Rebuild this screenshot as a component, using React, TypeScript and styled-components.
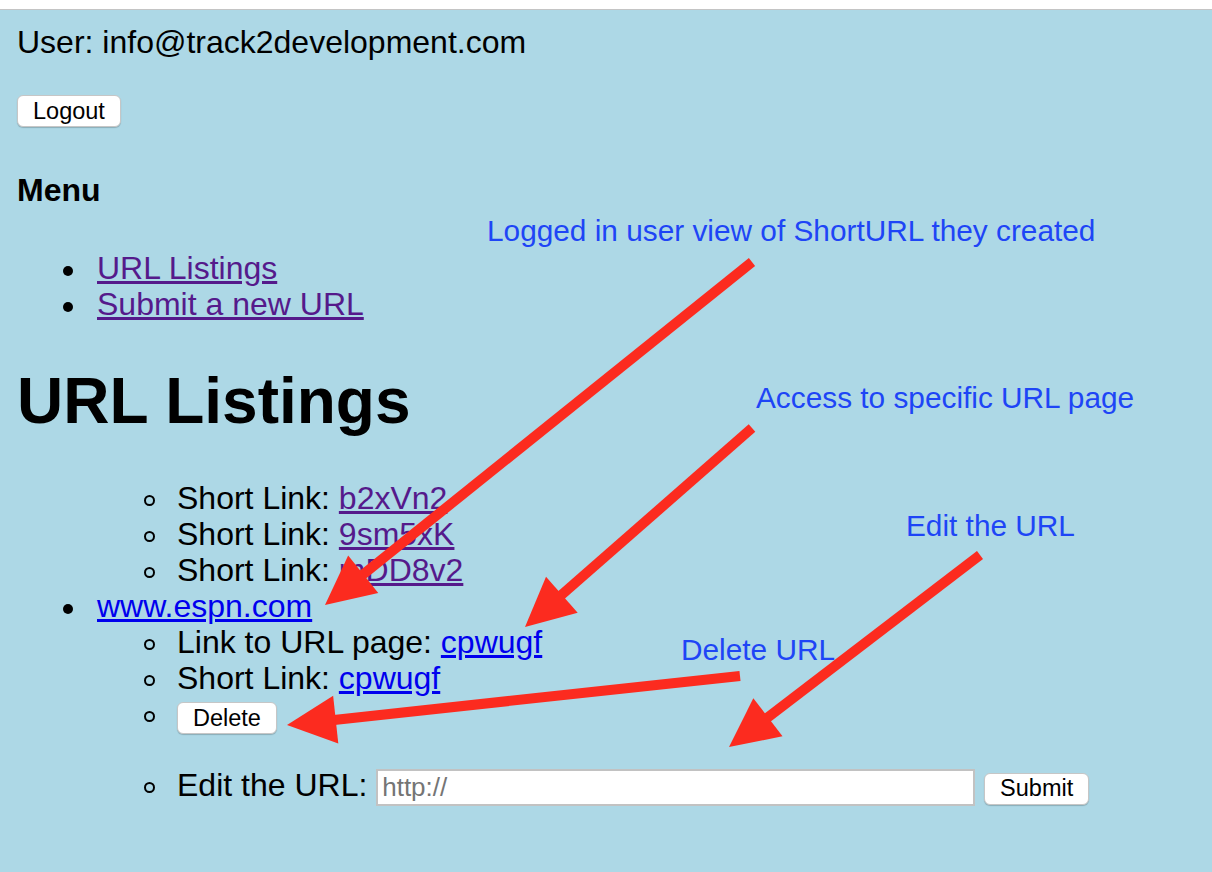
import styled, { createGlobalStyle } from 'styled-components';

type Point = { x: number; y: number };

type Arrow = { from: Point; tip: Point };

type Note = { text: string; x: number; y: number };

const notes: Note[] = [
  { text: 'Logged in user view of ShortURL they created', x: 487, y: 216 },
  { text: 'Access to specific URL page', x: 756, y: 383 },
  { text: 'Edit the URL', x: 906, y: 511 },
  { text: 'Delete URL', x: 681, y: 635 },
];

const arrows: Arrow[] = [
  { from: { x: 752, y: 262 }, tip: { x: 325, y: 605 } },
  { from: { x: 752, y: 428 }, tip: { x: 525, y: 627 } },
  { from: { x: 980, y: 555 }, tip: { x: 729, y: 747 } },
  { from: { x: 740, y: 676 }, tip: { x: 287, y: 725 } },
];

const HEAD_LENGTH = 49;
const HEAD_HALF = 24;

const arrowShape = ({ from, tip }: Arrow) => {
  const dx = tip.x - from.x;
  const dy = tip.y - from.y;
  const len = Math.hypot(dx, dy);
  const ux = dx / len;
  const uy = dy / len;
  const bx = tip.x - ux * HEAD_LENGTH;
  const by = tip.y - uy * HEAD_LENGTH;
  const nx = -uy;
  const ny = ux;
  return {
    line: { x1: from.x, y1: from.y, x2: bx + ux * 4, y2: by + uy * 4 },
    head: `${tip.x},${tip.y} ${bx + nx * HEAD_HALF},${by + ny * HEAD_HALF} ${bx - nx * HEAD_HALF},${by - ny * HEAD_HALF}`,
  };
};

const shortLinks = ['b2xVn2', '9sm5xK', 'mDD8v2'];

const App = () => {
  return (
    <Screen>
      <GlobalStyle />
      <TopStrip />
      <Page>
        <UserLine>User: info@track2development.com</UserLine>
        <LogoutForm>
          <Button type="button">Logout</Button>
        </LogoutForm>

        <MenuTitle>Menu</MenuTitle>
        <MenuList>
          <Item>
            <Link href="#" $visited>
              URL Listings
            </Link>
          </Item>
          <Item>
            <Link href="#" $visited>
              Submit a new URL
            </Link>
          </Item>
        </MenuList>

        <Title>URL Listings</Title>
        <Listing>
          <Entry $bare>
            <SubList>
              {shortLinks.map((code) => (
                <SubItem key={code}>
                  Short Link:{' '}
                  <Link href="#" $visited>
                    {code}
                  </Link>
                </SubItem>
              ))}
            </SubList>
          </Entry>
          <Entry>
            <Link href="#">www.espn.com</Link>
            <SubList>
              <SubItem>
                Link to URL page: <Link href="#">cpwugf</Link>
              </SubItem>
              <SubItem>
                Short Link: <Link href="#">cpwugf</Link>
              </SubItem>
              <SubItem $spaceAfter>
                <Button type="button" $lift>
                  Delete
                </Button>
              </SubItem>
              <SubItem>
                Edit the URL: <UrlInput placeholder="http://" /> <Button type="button">Submit</Button>
              </SubItem>
            </SubList>
          </Entry>
        </Listing>
      </Page>

      <Overlay width="1212" height="872" viewBox="0 0 1212 872">
        {arrows.map((arrow, i) => {
          const shape = arrowShape(arrow);
          return (
            <g key={i}>
              <line {...shape.line} stroke="#fc2b1f" strokeWidth="10" strokeLinecap="butt" />
              <polygon points={shape.head} fill="#fc2b1f" />
            </g>
          );
        })}
      </Overlay>
      {notes.map((note) => (
        <Annotation key={note.text} $x={note.x} $y={note.y}>
          {note.text}
        </Annotation>
      ))}
    </Screen>
  );
};

export default App;

const GlobalStyle = createGlobalStyle`
  html, body {
    margin: 0;
    padding: 0;
    background: #fff;
  }

  body {
    font-family: "Liberation Sans", Arial, Helvetica, sans-serif;
  }
`;

const Screen = styled.div`
  position: relative;
  display: flex;
  flex-direction: column;
  min-height: 100vh;
  overflow: hidden;
`;

const TopStrip = styled.div`
  height: 9px;
  background: #fff;
  border-bottom: 1px solid #c4c4c4;
`;

const Page = styled.main`
  flex: 1;
  padding: 14px 16px 0 17px;

  color: #000;
  font-size: 32px;
  line-height: 36px;

  background: #add8e6;
`;

const UserLine = styled.div``;

const LogoutForm = styled.form`
  display: flex;
  margin: 35px 0 0;
`;

const Button = styled.button<{ $lift?: boolean }>`
  height: 32px;
  padding: 1px 15px 0;
  position: relative;
  top: ${({ $lift }) => ($lift ? '1px' : '0')};

  color: #000;
  font-family: "Liberation Sans", Arial, sans-serif;
  font-size: 23.5px;
  line-height: 1;

  background: #fff;
  border: 1px solid #c6c6c6;
  border-radius: 6px;
  box-shadow: 0 1px 1px rgba(0, 0, 0, 0.2);
`;

const MenuTitle = styled.h4`
  margin: 45px 0 0;
  font-size: 32px;
  line-height: 36px;
  font-weight: bold;
`;

const MenuList = styled.ul`
  margin: 42px 0 0;
  padding-left: 80px;
  list-style: none;
`;

const Item = styled.li`
  position: relative;

  &::before {
    content: '';
    position: absolute;
    left: -34px;
    top: 16px;
    width: 10px;
    height: 10px;
    border-radius: 50%;
    background: #000;
  }
`;

const Title = styled.h1`
  margin: 42px 0 0;
  font-size: 64px;
  line-height: 74px;
  font-weight: bold;
`;

const Listing = styled.ul`
  margin: 42px 0 0;
  padding-left: 80px;
  list-style: none;
`;

const Entry = styled.li<{ $bare?: boolean }>`
  position: relative;

  &::before {
    content: '';
    display: ${({ $bare }) => ($bare ? 'none' : 'block')};
    position: absolute;
    left: -34px;
    top: 16px;
    width: 10px;
    height: 10px;
    border-radius: 50%;
    background: #000;
  }
`;

const SubList = styled.ul`
  margin: 0;
  padding-left: 80px;
  list-style: none;
`;

const SubItem = styled.li<{ $spaceAfter?: boolean }>`
  position: relative;
  margin-bottom: ${({ $spaceAfter }) => ($spaceAfter ? '34px' : '0')};

  &::before {
    content: '';
    position: absolute;
    left: -33px;
    top: 15px;
    width: 7px;
    height: 7px;
    border: 2px solid #000;
    border-radius: 50%;
  }
`;

const Link = styled.a<{ $visited?: boolean }>`
  color: ${({ $visited }) => ($visited ? '#551a8b' : '#0000ee')};
  text-decoration: underline;
`;

const UrlInput = styled.input`
  box-sizing: border-box;
  width: 599px;
  height: 37px;
  padding: 0 4px;

  color: #000;
  font-family: "Liberation Sans", Arial, sans-serif;
  font-size: 26px;

  background: #fff;
  border: 2px solid #c2c2c2;
  border-radius: 0;
  outline: none;

  &::placeholder {
    color: #757575;
  }
`;

const Overlay = styled.svg`
  position: absolute;
  top: 0;
  left: 0;
  pointer-events: none;
`;

const Annotation = styled.div<{ $x: number; $y: number }>`
  position: absolute;
  left: ${({ $x }) => $x}px;
  top: ${({ $y }) => $y}px;

  color: #1e45f6;
  font-family: "Liberation Sans", Arial, sans-serif;
  font-size: 29.8px;
  line-height: 29.8px;
  white-space: nowrap;
`;
